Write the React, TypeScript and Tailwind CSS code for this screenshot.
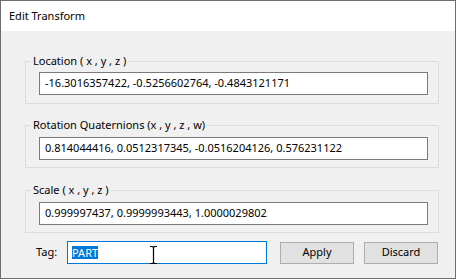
import React from "react";

const font = { fontFamily: '"Noto Sans", "Segoe UI", sans-serif' };

function Group({
  label,
  value,
  className,
  pt,
  pb,
}: {
  label: string;
  value: string;
  className: string;
  pt: string;
  pb: string;
}) {
  return (
    <fieldset className={`border border-[#dcdcdc] p-0 ${className}`}>
      <legend className="ml-[5px] px-[2px] text-[11px] leading-[16px] text-black">{label}</legend>
      <div className={`pl-[13px] pr-[10px] ${pt} ${pb}`}>
        <div className="h-[23px] border border-[#7a7a7a] bg-white pl-[5px] flex items-center text-[11px] text-black whitespace-nowrap overflow-hidden">
          {value}
        </div>
      </div>
    </fieldset>
  );
}

export default function App() {
  return (
    <div
      className="w-[456px] h-[279px] border border-[#6f6f6f] bg-[#f0f0f0] flex flex-col"
      style={font}
    >
      <div className="h-[30px] bg-white pl-[8px] flex items-center text-[11px] text-black shrink-0">
        Edit Transform
      </div>
      <div className="flex flex-col pl-[24px] pr-[16px] pt-[22px]">
        <Group
          label="Location ( x , y , z )"
          value="-16.3016357422, -0.5256602764, -0.4843121171"
          className=""
          pt="pt-[3px]"
          pb="pb-[8px]"
        />
        <Group
          label="Rotation Quaternions (x , y , z , w)"
          value="0.814044416, 0.0512317345, -0.0516204126, 0.576231122"
          className="mt-[13px]"
          pt="pt-[4px]"
          pb="pb-[7px]"
        />
        <Group
          label="Scale ( x , y , z )"
          value="0.999997437, 0.9999993443, 1.0000029802"
          className="mt-[14px]"
          pt="pt-[4px]"
          pb="pb-[7px]"
        />
        <div className="flex items-center mt-[8px] text-[11px] text-black">
          <span className="ml-[11px] w-[31px]">Tag:</span>
          <div className="relative w-[200px] h-[23px] border border-[#0078d7] bg-white pl-[4px] flex items-center">
            <span className="bg-[#0078d7] text-white leading-[13px]">PART</span>
            <svg
              className="absolute left-[81px] top-[3px]"
              width="9"
              height="20"
              viewBox="0 0 9 20"
            >
              <path
                d="M1 1.5h2.5l1 1 1-1H8M4.5 2.5v15M1 18.5h2.5l1-1 1 1H8"
                stroke="#000"
                strokeWidth="1.2"
                fill="none"
              />
            </svg>
          </div>
          <button className="ml-[13px] w-[74px] h-[22px] border border-[#adadad] bg-[#e1e1e1] text-[11px] text-black">
            Apply
          </button>
          <button className="ml-[10px] w-[74px] h-[22px] border border-[#adadad] bg-[#e1e1e1] text-[11px] text-black">
            Discard
          </button>
        </div>
      </div>
    </div>
  );
}
